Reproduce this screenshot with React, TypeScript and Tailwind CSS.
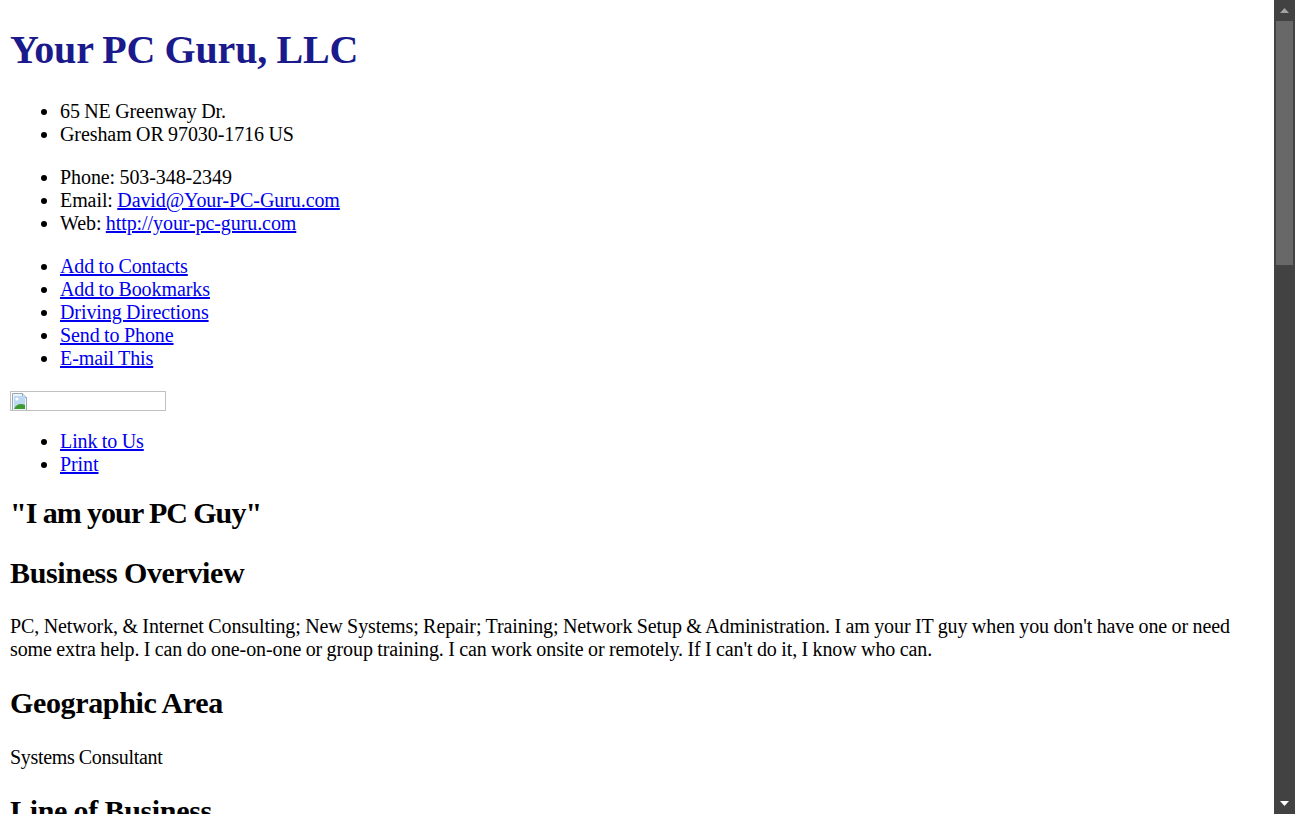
import React from 'react';

const contact = [
  { label: 'Phone: ', text: '503-348-2349' },
  { label: 'Email: ', text: 'David@Your-PC-Guru.com', href: '#email' },
  { label: 'Web: ', text: 'http://your-pc-guru.com', href: '#web' },
];

const actions = ['Add to Contacts', 'Add to Bookmarks', 'Driving Directions', 'Send to Phone', 'E-mail This'];

const Link = ({ children }: { children: React.ReactNode }) => (
  <a href="#" className="text-[#0000ee] underline">
    {children}
  </a>
);

const List = ({ children, className = '' }: { children: React.ReactNode; className?: string }) => (
  <ul className={`list-disc pl-[50px] ${className}`}>{children}</ul>
);

// broken image placeholder icon
const BrokenImage = () => (
  <div className="mt-[21px] h-[20px] w-[156px] border border-[#c0c0c0] overflow-hidden">
    <svg width="16" height="18" viewBox="0 0 16 18" className="ml-[1px] mt-[1px]">
      <path d="M0.5 0.5h10l4 4v13h-14z" fill="#eef3f8" stroke="#9aa8b6" />
      <path d="M10.5 0.5v4h4" fill="#dde5ee" stroke="#9aa8b6" />
      <rect x="2" y="3" width="11" height="13" fill="#bcd8f2" />
      <path d="M2 16 C4 11 9 10 13 12 V16z" fill="#3c9a2e" />
      <circle cx="5" cy="6" r="1.6" fill="#ffffff" />
    </svg>
  </div>
);

const Scrollbar = () => (
  <div className="w-[21px] h-full bg-[#424242] flex flex-col items-center">
    <div className="h-[21px] w-full flex items-center justify-center">
      <svg width="9" height="6" viewBox="0 0 9 6">
        <path d="M4.5 0L9 5H0z" fill="#a3a3a3" />
      </svg>
    </div>
    <div className="h-[244px] w-[17px] bg-[#686868]" />
    <div className="flex-1" />
    <div className="h-[21px] w-full flex items-center justify-center">
      <svg width="9" height="6" viewBox="0 0 9 6">
        <path d="M0 0H9L4.5 5z" fill="#ffffff" />
      </svg>
    </div>
  </div>
);

const h2 = 'text-[30px] leading-[34.5px] font-bold tracking-[-0.35px]';

const App = () => {
  return (
    <div className="flex h-[814px] w-full overflow-hidden bg-white text-black font-['Liberation_Serif',serif] text-[20px] leading-[23px] tracking-[-0.08px] [word-spacing:-0.5px]">
      <main className="flex-1 min-w-0 px-[10px] overflow-hidden">
        <h1 className="mt-[27px] mb-[27px] text-[40px] leading-[46px] font-bold tracking-[-0.18px] text-[#1a1a8c]">
          Your PC Guru, LLC
        </h1>

        <List className="my-[20px]">
          <li>65 NE Greenway Dr.</li>
          <li>Gresham OR 97030-1716 US</li>
        </List>

        <List className="my-[20px]">
          {contact.map((c) => (
            <li key={c.label}>
              {c.label}
              {c.href ? <Link>{c.text}</Link> : c.text}
            </li>
          ))}
        </List>

        <List className="mt-[20px]">
          {actions.map((a) => (
            <li key={a}>
              <Link>{a}</Link>
            </li>
          ))}
        </List>

        <BrokenImage />

        <List className="mt-[19px]">
          <li>
            <Link>Link to Us</Link>
          </li>
          <li>
            <Link>Print</Link>
          </li>
        </List>

        <h2 className="mt-[20px] mb-[25px] text-[30px] leading-[34.5px] font-bold tracking-[-0.9px]">"I am your PC Guy"</h2>

        <h2 className={`my-[25px] ${h2}`}>Business Overview</h2>
        <p className="my-[20px]">
          PC, Network, &amp; Internet Consulting; New Systems; Repair; Training; Network Setup &amp; Administration. I am
          your IT guy when you don't have one or need some extra help. I can do one-on-one or group training. I can work
          onsite or remotely. If I can't do it, I know who can.
        </p>

        <h2 className={`mt-[25px] mb-[25px] ${h2} tracking-[-0.5px]`}>Geographic Area</h2>
        <p className="my-[20px] tracking-[-0.3px]">Systems Consultant</p>

        <h2 className={`mt-[25px] mb-[25px] ${h2}`}>Line of Business</h2>
      </main>
      <Scrollbar />
    </div>
  );
};

export default App;
